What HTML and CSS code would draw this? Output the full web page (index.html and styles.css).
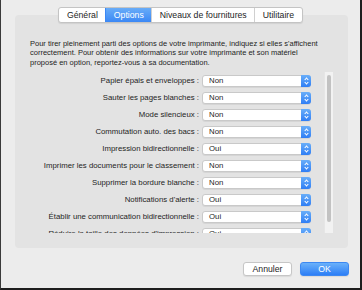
FILE: index.html
```html
<!DOCTYPE html>
<html lang="fr">
<head>
    <meta charset="UTF-8">
    <title>Options de l'imprimante</title>
    <link rel="stylesheet" href="styles.css">
</head>
<body>
    <div class="window">
        <div class="tabs">
            <span class="tab">Général</span>
            <span class="tab active">Options</span>
            <span class="tab">Niveaux de fournitures</span>
            <span class="tab">Utilitaire</span>
        </div>

        <div class="panel">
            <p class="intro">Pour tirer pleinement parti des options de votre imprimante, indiquez si elles s'affichent correctement. Pour obtenir des informations sur votre imprimante et son matériel<br>proposé en option, reportez-vous à sa documentation.</p>

            <div class="scroll">
                <div class="rows">
                    <label>Papier épais et enveloppes :</label>
                    <div class="popup">Non<span class="arrows"></span></div>
                    <label>Sauter les pages blanches :</label>
                    <div class="popup">Non<span class="arrows"></span></div>
                    <label>Mode silencieux :</label>
                    <div class="popup">Non<span class="arrows"></span></div>
                    <label>Commutation auto. des bacs :</label>
                    <div class="popup">Non<span class="arrows"></span></div>
                    <label>Impression bidirectionnelle :</label>
                    <div class="popup">Oui<span class="arrows"></span></div>
                    <label>Imprimer les documents pour le classement :</label>
                    <div class="popup">Non<span class="arrows"></span></div>
                    <label>Supprimer la bordure blanche :</label>
                    <div class="popup">Non<span class="arrows"></span></div>
                    <label>Notifications d'alerte :</label>
                    <div class="popup">Oui<span class="arrows"></span></div>
                    <label>Établir une communication bidirectionnelle :</label>
                    <div class="popup">Oui<span class="arrows"></span></div>
                    <label>Réduire la taille des données d'impression :</label>
                    <div class="popup">Oui<span class="arrows"></span></div>
                </div>
                <div class="scrollbar"><div class="thumb"></div></div>
            </div>
        </div>

        <div class="buttons">
            <button class="btn">Annuler</button>
            <button class="btn primary">OK</button>
        </div>
    </div>
</body>
</html>
```

FILE: styles.css
```css
body, html {
    margin: 0;
    padding: 0;
    background: #ececec;
    font-family: 'Liberation Sans', Arial, sans-serif;
    color: #242424;
}
.window {
    box-sizing: border-box;
    width: 362px;
    height: 290px;
    background: #ececec;
    border-left: 1px solid #3a3a3a;
    border-right: 2px solid #1e1e1e;
    border-bottom: 2px solid #1e1e1e;
    padding-top: 7px;
    overflow: hidden;
}
.tabs {
    display: flex;
    width: max-content;
    margin: 0 auto;
    position: relative;
    z-index: 1;
    background: #fff;
    border: 1px solid #c4c4c4;
    border-radius: 3px;
    box-shadow: 0 1px 1px rgba(0, 0, 0, 0.08);
    overflow: hidden;
}
.tab {
    height: 14px;
    line-height: 14px;
    font-size: 8.7px;
    padding: 0 7.5px;
    border-left: 1px solid #d0d0d0;
}
.tab:first-child {
    border-left: none;
}
.tab.active {
    color: #fff;
    background: linear-gradient(#68acf8, #3b88f5);
    border-left-color: #3b88f5;
}
.panel {
    margin: -8px 12px 0 14px;
    padding: 24px 15px 15px 15px;
    background: #e3e3e3;
    border-radius: 4px;
}
.intro {
    margin: 0;
    font-size: 7.5px;
    line-height: 9.4px;
}
.scroll {
    display: flex;
    height: 161px;
    margin-top: 5px;
    overflow: hidden;
}
.rows {
    display: grid;
    grid-template-columns: 169px 109px;
    grid-auto-rows: 17px;
    column-gap: 3px;
    align-items: center;
    align-content: start;
}
.rows label {
    text-align: right;
    font-size: 7.8px;
    white-space: nowrap;
}
.popup {
    position: relative;
    box-sizing: border-box;
    height: 12px;
    line-height: 10px;
    padding-left: 6px;
    font-size: 7.8px;
    background: #fff;
    border: 1px solid #c9c9c9;
    border-radius: 3px;
    box-shadow: 0 1px 0 rgba(0, 0, 0, 0.06);
}
.arrows {
    position: absolute;
    top: -1px;
    right: -1px;
    bottom: -1px;
    width: 10px;
    border-radius: 0 3px 3px 0;
    background: linear-gradient(#69aef9, #2f7ef5);
}
.arrows::before, .arrows::after {
    content: "";
    position: absolute;
    left: 3.5px;
    width: 2px;
    height: 2px;
    border: solid #fff;
    border-width: 1px 1px 0 0;
}
.arrows::before {
    top: 3px;
    transform: rotate(-45deg);
}
.arrows::after {
    bottom: 3px;
    transform: rotate(135deg);
}
.scrollbar {
    box-sizing: border-box;
    width: 9px;
    margin-left: 13px;
    padding: 3px 2px 11px 2px;
    background: #f2f2f2;
    border-left: 1px solid #e6e6e6;
}
.thumb {
    height: 100%;
    background: #c2c2c2;
    border-radius: 3px;
}
.buttons {
    display: flex;
    justify-content: flex-end;
    gap: 8px;
    margin: 14px 11px 0 0;
}
.btn {
    box-sizing: border-box;
    width: 49px;
    height: 14px;
    padding: 0;
    font-family: inherit;
    font-size: 8.7px;
    color: #242424;
    background: #fff;
    border: 1px solid #c6c6c6;
    border-radius: 3px;
    box-shadow: 0 1px 1px rgba(0, 0, 0, 0.08);
}
.btn.primary {
    color: #fff;
    background: linear-gradient(#6ab1fa, #2c7ef6);
    border-color: #3c88f2;
}
```
